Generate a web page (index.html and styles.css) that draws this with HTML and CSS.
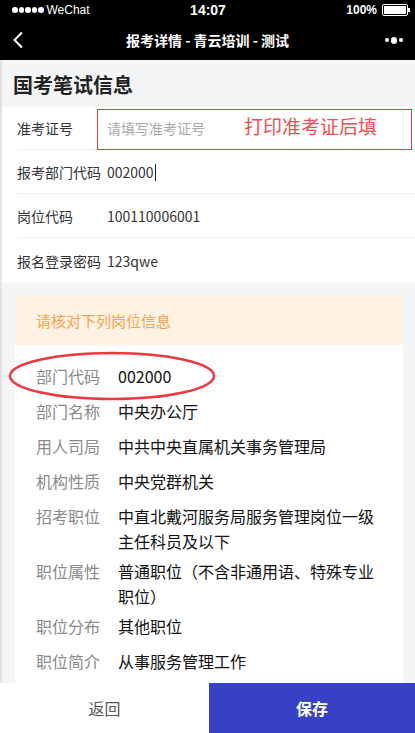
FILE: index.html
```html
<!DOCTYPE html>
<html lang="zh-CN">

<head>
    <meta charset="UTF-8" />
    <meta name="viewport" content="width=device-width, initial-scale=1.0" />
    <title>报考详情 - 青云培训 - 测试</title>
    <link rel="stylesheet" href="styles.css">
</head>

<body>
    <div class="page">
        <div class="status-bar">
            <div class="carrier">
                <span class="signal"><i></i><i></i><i></i><i></i><i></i></span>
                WeChat
            </div>
            <div class="clock">14:07</div>
            <div class="power">100% <span class="battery"><span class="level"></span></span></div>
        </div>

        <nav class="nav-bar">
            <svg class="back" width="12" height="18" viewBox="0 0 12 18">
                <path d="M10 1.5 L2.5 9 L10 16.5" fill="none" stroke="#fff" stroke-width="2" />
            </svg>
            <div class="nav-title">报考详情 - 青云培训 - 测试</div>
            <div class="more"><i class="dot"></i><i class="dot big"></i><i class="dot"></i></div>
        </nav>

        <main class="content">
            <h1 class="section-title">国考笔试信息</h1>

            <section class="form">
                <div class="form-row">
                    <div class="label">准考证号</div>
                    <div class="value placeholder">请填写准考证号</div>
                    <!-- annotation over the input -->
                    <div class="mark-box"></div>
                    <div class="mark-text">打印准考证后填</div>
                </div>
                <div class="form-row">
                    <div class="label">报考部门代码</div>
                    <div class="value">002000<span class="caret"></span></div>
                </div>
                <div class="form-row">
                    <div class="label">岗位代码</div>
                    <div class="value">100110006001</div>
                </div>
                <div class="form-row">
                    <div class="label">报名登录密码</div>
                    <div class="value">123qwe</div>
                </div>
            </section>

            <section class="card">
                <div class="card-head">请核对下列岗位信息</div>
                <div class="card-body">
                    <svg class="mark-ring" width="210" height="52" viewBox="0 0 210 52">
                        <ellipse cx="105" cy="26" rx="102" ry="23" fill="none" stroke="#ea3a40" stroke-width="2.5" />
                    </svg>
                    <div class="info-row"><div class="info-label">部门代码</div><div class="info-value">002000</div></div>
                    <div class="info-row"><div class="info-label">部门名称</div><div class="info-value">中央办公厅</div></div>
                    <div class="info-row"><div class="info-label">用人司局</div><div class="info-value">中共中央直属机关事务管理局</div></div>
                    <div class="info-row"><div class="info-label">机构性质</div><div class="info-value">中央党群机关</div></div>
                    <div class="info-row"><div class="info-label">招考职位</div><div class="info-value">中直北戴河服务局服务管理岗位一级主任科员及以下</div></div>
                    <div class="info-row"><div class="info-label">职位属性</div><div class="info-value">普通职位（不含非通用语、特殊专业职位）</div></div>
                    <div class="info-row"><div class="info-label">职位分布</div><div class="info-value">其他职位</div></div>
                    <div class="info-row"><div class="info-label">职位简介</div><div class="info-value">从事服务管理工作</div></div>
                </div>
            </section>
        </main>

        <footer class="action-bar">
            <button class="btn btn-back">返回</button>
            <button class="btn btn-save">保存</button>
        </footer>
    </div>
</body>

</html>
```

FILE: styles.css
```css
:root {
    --page: #f4f5f7;
    --line: #efefef;
    --text: #333333;
    --muted: #8a8a8a;
    --orange: #f6a34a;
    --orange-bg: #fff2e4;
    --red: #ea3a40;
    --blue: #3641c3;
}

/* Base */
body {
    margin: 0;
    font-family: "Noto Sans CJK SC", "Liberation Sans", sans-serif;
    color: var(--text);
    background: #000;
}

.page {
    width: 415px;
    height: 733px;
    display: flex;
    flex-direction: column;
    overflow: hidden;
}

/* Status bar */
.status-bar {
    height: 20px;
    background: #000;
    color: #fff;
    font-family: "Liberation Sans", sans-serif;
    font-size: 12px;
    display: grid;
    grid-template-columns: 1fr auto 1fr;
    align-items: center;
    padding: 0 7px 0 12px;
}

.carrier {
    display: flex;
    align-items: center;
    gap: 3px;
}

.signal {
    display: flex;
    gap: 1px;
}

.signal i {
    width: 5.5px;
    height: 5.5px;
    border-radius: 50%;
    background: #fff;
}

.clock {
    font-size: 14px;
    font-weight: bold;
    padding-right: 4px;
}

.power {
    display: flex;
    justify-content: flex-end;
    align-items: center;
    gap: 5px;
    font-weight: bold;
}

.battery {
    position: relative;
    width: 22px;
    height: 8px;
    border: 1px solid #fff;
    border-radius: 2px;
    padding: 1px;
}

.battery::after {
    content: "";
    position: absolute;
    right: -3px;
    top: 3px;
    width: 2px;
    height: 4px;
    background: #fff;
}

.battery .level {
    display: block;
    height: 100%;
    background: #fff;
}

/* Navigation bar */
.nav-bar {
    height: 40px;
    background: #000;
    color: #fff;
    display: flex;
    align-items: center;
    padding: 0 12px 0 12px;
}

.back {
    width: 12px;
}

.nav-title {
    flex: 1;
    text-align: center;
    font-size: 14px;
    font-weight: bold;
    padding-left: 6px;
}

.more {
    display: flex;
    align-items: center;
    gap: 2px;
    width: 18px;
}

.more .dot {
    width: 4px;
    height: 4px;
    border-radius: 50%;
    background: #fff;
}

.more .dot.big {
    width: 7px;
    height: 7px;
}

/* Content */
.content {
    flex: 1;
    overflow: hidden;
    background: var(--page);
    border-left: 2px solid #e2e2e2;
}

.section-title {
    margin: 0;
    height: 47px;
    line-height: 49px;
    padding-left: 11px;
    font-size: 20px;
    font-weight: bold;
    color: #222;
}

.form {
    background: #fff;
    padding-left: 15px;
    margin-bottom: 13px;
}

.form-row {
    position: relative;
    height: 44px;
    display: flex;
    align-items: center;
    border-bottom: 1px solid var(--line);
    box-sizing: border-box;
    font-size: 14px;
}

.form-row:first-child {
    height: 43px;
}

.form-row:last-child {
    border-bottom: none;
    height: 45px;
}

.form-row .label {
    width: 90px;
    color: #333;
}

.form-row .value {
    color: #333;
}

.form-row .placeholder {
    color: #a9a9a9;
}

.caret {
    display: inline-block;
    width: 1px;
    height: 17px;
    margin-left: 1px;
    vertical-align: -3px;
    background: #222;
}

.mark-box {
    position: absolute;
    left: 80px;
    top: 2px;
    right: 3px;
    bottom: -1px;
    border: 1.5px solid var(--red);
}

.mark-text {
    position: absolute;
    left: 227px;
    top: 5px;
    font-size: 19px;
    color: #f24d52;
}

/* Position card */
.card {
    margin: 0 12px 0 13px;
    background: #fff;
}

.card-head {
    height: 49px;
    line-height: 49px;
    padding-left: 21px;
    background: var(--orange-bg);
    color: var(--orange);
    font-size: 15px;
}

.card-body {
    position: relative;
    padding: 14px 20px 20px 21px;
}

.mark-ring {
    position: absolute;
    left: -8px;
    top: 5px;
}

.info-row {
    display: flex;
    font-size: 16px;
}

.info-label {
    width: 82px;
    flex-shrink: 0;
    line-height: 35px;
    color: var(--muted);
}

.info-value {
    padding-top: 5px;
    line-height: 25px;
    color: #111;
}

/* Bottom actions */
.action-bar {
    height: 50px;
    display: grid;
    grid-template-columns: 209px 1fr;
}

.btn {
    border: none;
    margin: 0;
    font-family: "Noto Sans CJK SC", sans-serif;
    font-size: 16px;
}

.btn-back {
    background: #fff;
    color: #555;
}

.btn-save {
    background: var(--blue);
    color: #fff;
    font-weight: bold;
}
```
